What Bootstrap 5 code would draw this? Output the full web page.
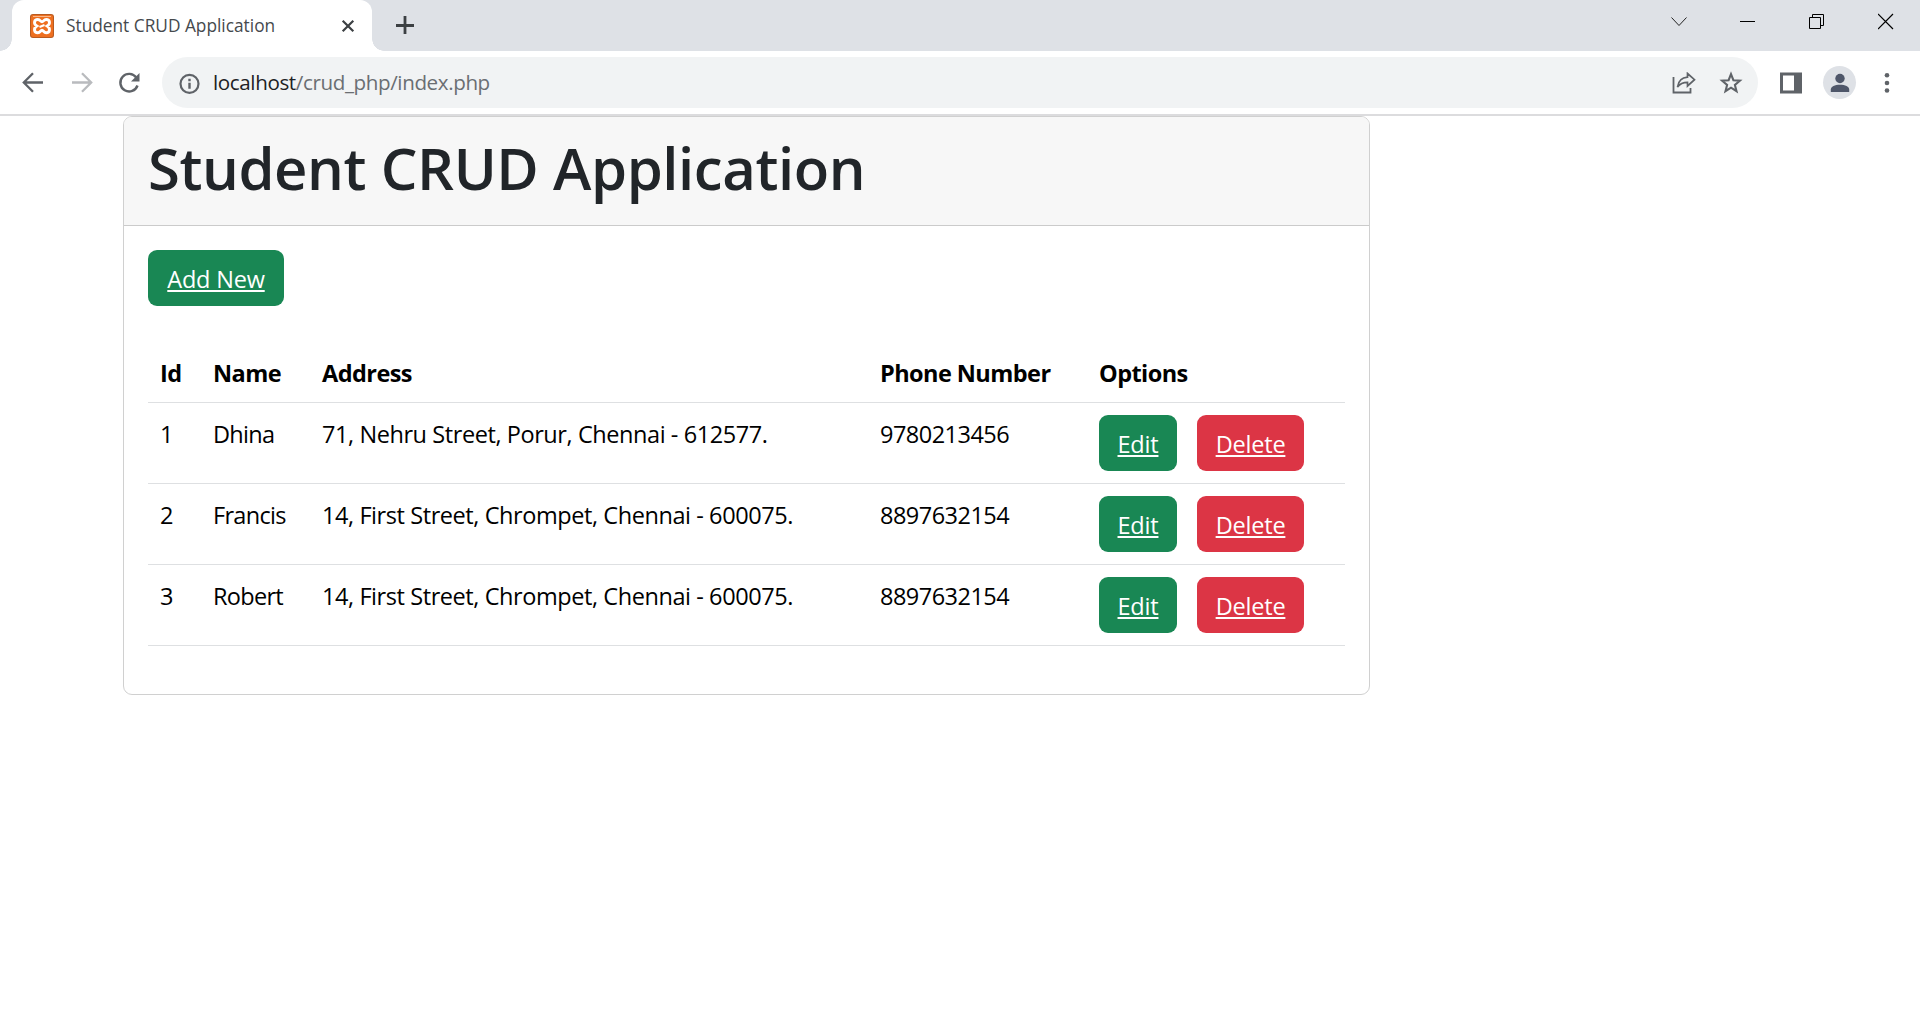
<!DOCTYPE html>
<html lang="en">
<head>
<meta charset="utf-8">
<title>Student CRUD Application</title>
<link href="https://cdn.jsdelivr.net/npm/bootstrap@5.3.0/dist/css/bootstrap.min.css" rel="stylesheet">
<style>
body{font-family:"Open Sans","Noto Sans",sans-serif;background:#fff;overflow:hidden}
svg{display:block;flex:none}
.tabstrip{height:51px;background:#dee1e6;padding-left:12px}
.browser-tab{width:360px;height:51px;background:#fff;border-radius:12px 12px 0 0;padding:0 15px 0 18px;position:relative}
.browser-tab::before,.browser-tab::after{content:"";position:absolute;bottom:0;width:12px;height:12px}
.browser-tab::before{left:-12px;background:radial-gradient(circle at 0 0,transparent 11.5px,#fff 12px)}
.browser-tab::after{right:-12px;background:radial-gradient(circle at 100% 0,transparent 11.5px,#fff 12px)}
.tab-title{font-size:17.3px;line-height:24px;color:#45494d;margin-left:12px;white-space:nowrap}
.new-tab{margin:16px 0 0 24px}
.window-controls{gap:53px;padding-right:26px;padding-top:13px}
.toolbar{height:65px;border-bottom:2px solid #dcdcde;padding:6px 23px 6px 22px}
.forward-icon{margin-left:27px}
.reload-icon{margin:0 22px 0 25px}
.star-icon{margin-left:23px}
.panel-icon{margin-left:22px}
.omnibox{height:51px;background:#f1f3f4;border-radius:26px;padding:0 15px 0 16px}
.address{font-size:20.6px;line-height:30px;letter-spacing:-.39px;color:#6a6e72;margin:-2px 0 0 13px;white-space:nowrap}
.address b{font-weight:400;color:#202124}
.avatar{width:33px;height:33px;background:#dee1e6;margin:0 21px}
.app-card{width:1247px;margin-left:123px;border-color:#d0d0d0;border-radius:9px;font-size:23.5px}
.app-card .card-header{height:109px;padding:12px 24px;background:#f7f7f7;border-bottom-color:#cbcbcb;border-radius:8px 8px 0 0}
.app-title{font-size:58px;font-weight:600;line-height:72px;letter-spacing:-.42px;color:#212529;white-space:nowrap;margin:3px 0 0}
.app-card .card-body{padding:24px}
.app-btn{height:56px;font-size:23.5px;line-height:36px;letter-spacing:-.2px;padding:11px 0 9px;border:0;border-radius:9px;text-decoration:underline;text-decoration-thickness:2px;text-underline-offset:2px;white-space:nowrap;color:#fff}
.add-btn{width:136px;margin-bottom:36px}
.edit-btn{width:78px}
.delete-btn{width:107px}
.students{table-layout:fixed;margin-bottom:24px;color:#000;--bs-table-color:#000;border-color:#dee0e2;line-height:36px;letter-spacing:-.42px}
.students>:not(caption)>*>*{padding:13px 12px 11px;white-space:nowrap;height:81px}
.students>thead>tr>th{height:60px;padding:12px 12px 11px;letter-spacing:-.56px}
.students>tbody>tr>.actions{padding:12px}
.students .name-cell{letter-spacing:-.7px}
.students .phone-cell{letter-spacing:-.52px}
.actions .d-flex{gap:20px}
.col-id{width:53px}.col-name{width:109px}.col-address{width:558px}.col-phone{width:219px}
</style>
</head>
<body>
<header>
  <div class="tabstrip d-flex">
    <div class="browser-tab d-flex align-items-center">
      <svg width="24" height="24" viewBox="0 0 24 24"><rect width="24" height="24" rx="3" fill="#b85a20"/><rect x="1" y="1" width="22" height="22" rx="2" fill="#ee6f20"/><path d="M3 2.500h18" stroke="#f9b98c"/><path d="M6.800 12C3.300 9.800 4 5.500 7.800 5.500c2.500 0 2.700 2.300 4.200 2.300s1.700-2.300 4.200-2.300c3.800 0 4.500 4.300 1 6.500 3.500 2.200 2.800 6.800-1 6.800-2.500 0-2.700-2.500-4.200-2.500s-1.700 2.500-4.200 2.500c-3.800 0-4.500-4.600-1-6.800z" fill="none" stroke="#fff" stroke-width="2.900"/><path d="M9.500 13l5-2" stroke="#fff" stroke-width="2"/></svg>
      <span class="tab-title">Student CRUD Application</span>
      <svg class="ms-auto" width="18" height="18" viewBox="0 0 18 18"><path d="M3.700 3.700l10.600 10.600M14.300 3.700L3.700 14.300" stroke="#3c4043" stroke-width="2.200"/></svg>
    </div>
    <svg class="new-tab" width="18" height="18" viewBox="0 0 18 18"><path d="M9 0v18M0 9.500h18" stroke="#3c4043" stroke-width="2.800"/></svg>
    <div class="window-controls d-flex ms-auto">
      <svg width="17" height="17" viewBox="0 0 17 17"><path d="M1.500 4.500l7.500 8 7.500-8" fill="none" stroke="#222"/></svg>
      <svg width="16" height="17" viewBox="0 0 16 17"><path d="M0 8.500h15" stroke="#000"/></svg>
      <svg width="16" height="17" viewBox="0 0 16 17"><path d="M.5 4.500h11v11H.5zM3.500 4V1.500h11v11H12" fill="none" stroke="#000"/></svg>
      <svg width="16" height="17" viewBox="0 0 16 17"><path d="M0 1l15 15M15 1L0 16" stroke="#000" stroke-width="1.200"/></svg>
    </div>
  </div>
  <div class="toolbar d-flex align-items-center">
    <svg width="22" height="22" viewBox="0 0 22 22"><path d="M21 10.500H2.500M11 1.300l-9.200 9.200 9.200 9.200" fill="none" stroke="#5f6368" stroke-width="2.300"/></svg>
    <svg class="forward-icon" width="22" height="22" viewBox="0 0 22 22"><path d="M1 10.500h18.500M11 1.300l9.200 9.200-9.200 9.200" fill="none" stroke="#b9bbbe" stroke-width="2.300"/></svg>
    <svg class="reload-icon" width="22" height="22" viewBox="0 0 22 22"><path d="M18.300 5.500A8.800 8.800 0 1 0 19.500 13.500" fill="none" stroke="#5f6368" stroke-width="2.400"/><path d="M21.500 1v8.500H13z" fill="#5f6368"/></svg>
    <div class="omnibox d-flex align-items-center flex-grow-1">
      <svg width="22" height="22" viewBox="0 0 22 22"><circle cx="11.500" cy="11.800" r="9" fill="none" stroke="#5f6368" stroke-width="2.200"/><path d="M11.500 10.800v6M11.500 6.800v2.400" stroke="#5f6368" stroke-width="2.400"/></svg>
      <span class="address"><b>localhost</b>/crud_php/index.php</span>
      <svg class="ms-auto" width="24" height="22" viewBox="0 0 24 22"><path d="M1.500 5v15.500h17V16" fill="none" stroke="#5f6368" stroke-width="1.800"/><path d="M15.500 1.500l7 6.200-7 6.300v-3.700c-5 0-7.500 1.300-10 4.700.8-5.500 4-9.300 10-9.800z" fill="none" stroke="#5f6368" stroke-width="1.700"/></svg>
      <svg class="star-icon" width="24" height="24" viewBox="0 0 24 24"><path d="M12 3.200l2.400 6 6.500.5-5 4.200 1.600 6.300-5.500-3.500-5.500 3.500 1.600-6.300-5-4.200 6.500-.5z" fill="none" stroke="#5f6368" stroke-width="2.100"/></svg>
    </div>
    <svg class="panel-icon" width="22" height="22" viewBox="0 0 22 22"><path fill-rule="evenodd" d="M0 .5h22v21H0zM3 3.500v15h11v-15z" fill="#5f6368"/></svg>
    <div class="avatar rounded-circle d-flex align-items-center justify-content-center">
      <svg width="20" height="20" viewBox="0 0 20 20"><circle cx="10" cy="5.500" r="4.700" fill="#4e5669"/><path d="M.8 19v-2.500c0-3 4-4.800 9.200-4.800s9.200 1.800 9.200 4.800V19z" fill="#4e5669"/></svg>
    </div>
    <svg width="20" height="22" viewBox="0 0 20 22"><g fill="#5f6368"><circle cx="10" cy="3.300" r="2.300"/><circle cx="10" cy="11" r="2.300"/><circle cx="10" cy="18.500" r="2.300"/></g></svg>
  </div>
</header>
<main class="card app-card">
  <div class="card-header"><h1 class="app-title">Student CRUD Application</h1></div>
  <div class="card-body">
    <button class="btn btn-success app-btn add-btn d-block">Add New</button>
    <table class="table students">
      <colgroup><col class="col-id"><col class="col-name"><col class="col-address"><col class="col-phone"><col></colgroup>
      <thead><tr><th>Id</th><th>Name</th><th>Address</th><th>Phone Number</th><th>Options</th></tr></thead>
      <tbody>
        <tr><td>1</td><td class="name-cell">Dhina</td><td>71, Nehru Street, Porur, Chennai - 612577.</td><td class="phone-cell">9780213456</td><td class="actions"><div class="d-flex"><button class="btn btn-success app-btn edit-btn">Edit</button><button class="btn btn-danger app-btn delete-btn">Delete</button></div></td></tr>
        <tr><td>2</td><td class="name-cell">Francis</td><td>14, First Street, Chrompet, Chennai - 600075.</td><td class="phone-cell">8897632154</td><td class="actions"><div class="d-flex"><button class="btn btn-success app-btn edit-btn">Edit</button><button class="btn btn-danger app-btn delete-btn">Delete</button></div></td></tr>
        <tr><td>3</td><td class="name-cell">Robert</td><td>14, First Street, Chrompet, Chennai - 600075.</td><td class="phone-cell">8897632154</td><td class="actions"><div class="d-flex"><button class="btn btn-success app-btn edit-btn">Edit</button><button class="btn btn-danger app-btn delete-btn">Delete</button></div></td></tr>
      </tbody>
    </table>
  </div>
</main>
<script src="https://cdn.jsdelivr.net/npm/bootstrap@5.3.0/dist/js/bootstrap.bundle.min.js"></script>
</body>
</html>
